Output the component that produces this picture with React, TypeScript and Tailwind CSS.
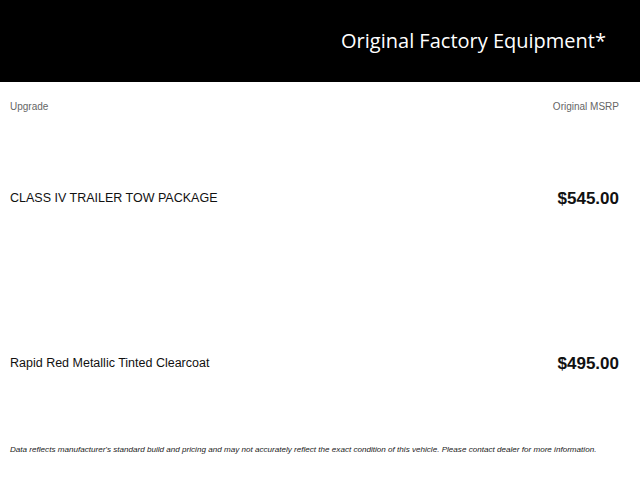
import React from "react";

export default function App() {
  const rows = [
    { name: "CLASS IV TRAILER TOW PACKAGE", price: "$545.00" },
    { name: "Rapid Red Metallic Tinted Clearcoat", price: "$495.00" },
  ];
  return (
    <div className="w-[640px] h-[480px] bg-white overflow-hidden" style={{ fontFamily: '"Liberation Sans", Arial, sans-serif' }}>
      <div className="h-[82px] bg-black flex items-center justify-end pr-[34px]">
        <h1 className="text-white text-[20px] leading-none" style={{ fontFamily: '"Open Sans", sans-serif' }}>
          Original Factory Equipment*
        </h1>
      </div>
      <div className="pl-[10px] pr-[21px]">
        <div className="flex justify-between pt-[18px] pb-[3px] text-[10px] leading-[13px] text-[#666]">
          <span>Upgrade</span>
          <span>Original MSRP</span>
        </div>
        {rows.map((r) => (
          <div key={r.name} className="h-[165px] flex items-center justify-between">
            <span className="text-[12.5px] text-[#111]">{r.name}</span>
            <span className="text-[17px] font-bold text-[#111]">{r.price}</span>
          </div>
        ))}
        <p className="text-[8.1px] italic text-[#222] leading-[10px] -mt-[1px]">
          Data reflects manufacturer's standard build and pricing and may not accurately reflect the exact condition of this vehicle. Please contact dealer for more information.
        </p>
      </div>
    </div>
  );
}
